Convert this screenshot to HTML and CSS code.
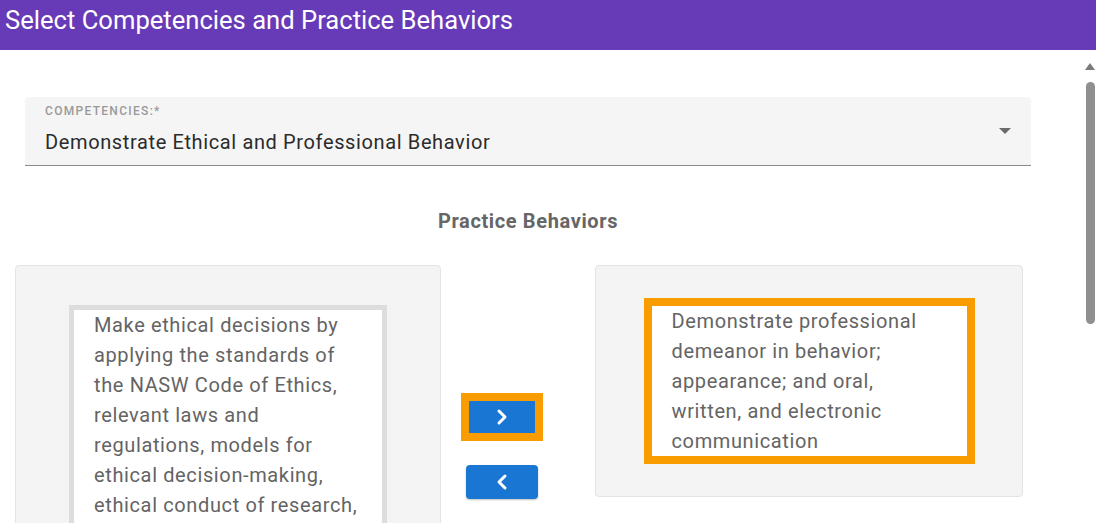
FILE: index.html
```html
<!DOCTYPE html>
<html>
<head>
  <title>Select Competencies</title>
  <link rel="stylesheet" href="styles.css">
</head>
<body>

  <div class="title-bar">
    <h1>Select Competencies and Practice Behaviors</h1>
  </div>

  <div class="main">
    <div class="content">

      <div class="select-field">
        <label class="select-label">Competencies:*</label>
        <div class="select-value">Demonstrate Ethical and Professional Behavior</div>
        <span class="select-arrow"></span>
      </div>

      <h2 class="section-title">Practice Behaviors</h2>

      <div class="transfer">
        <div class="list-panel left-panel">
          <div class="list-box">
            Make ethical decisions by applying the standards of the NASW Code of Ethics, relevant laws and regulations, models for ethical decision-making, ethical conduct of research, and additional codes of ethics as appropriate to context;
          </div>
        </div>

        <div class="transfer-buttons">
          <button class="move-btn focused">
            <svg width="24" height="24" viewBox="0 0 24 24"><path d="M9 6l6 6-6 6" fill="none" stroke="#fff" stroke-width="3" stroke-linecap="round" stroke-linejoin="round"/></svg>
          </button>
          <button class="move-btn">
            <svg width="24" height="24" viewBox="0 0 24 24"><path d="M15 6l-6 6 6 6" fill="none" stroke="#fff" stroke-width="3" stroke-linecap="round" stroke-linejoin="round"/></svg>
          </button>
        </div>

        <div class="list-panel right-panel">
          <div class="list-box selected">
            Demonstrate professional demeanor in behavior; appearance; and oral, written, and electronic communication
          </div>
        </div>
      </div>

    </div>

    <!-- fake scrollbar of the dialog body -->
    <div class="scrollbar">
      <span class="scroll-up"></span>
      <span class="scroll-thumb"></span>
    </div>
  </div>

</body>
</html>
```

FILE: styles.css
```css
body {
  margin: 0;
  background-color: #ffffff;
  font-family: Roboto, "Liberation Sans", sans-serif;
  overflow: hidden;
}

.title-bar {
  background-color: #673ab7;
  color: #ffffff;
  height: 50px;
  padding-left: 5px;
}

.title-bar h1 {
  margin: 0;
  font-size: 25.6px;
  font-weight: 400;
  line-height: 41px;
}

.main {
  display: flex;
}

.content {
  flex: 1;
  padding-top: 47px;
}

/* Select field */
.select-field {
  position: relative;
  margin: 0 53px 0 25px;
  height: 68px;
  background-color: #f5f5f5;
  border-bottom: 1px solid #8a8a8a;
  border-radius: 4px 4px 0 0;
  padding-left: 20px;
}

.select-label {
  display: block;
  padding-top: 7px;
  font-size: 12px;
  font-weight: 500;
  color: #9a9a9a;
  text-transform: uppercase;
  letter-spacing: 1.3px;
}

.select-value {
  margin-top: 12px;
  font-size: 20px;
  color: #2b2b2b;
  letter-spacing: 0.625px;
}

.select-arrow {
  position: absolute;
  right: 20px;
  top: 31px;
  border-left: 6px solid transparent;
  border-right: 6px solid transparent;
  border-top: 6px solid #6b6b6b;
}

.section-title {
  margin: 43px 0 0 25px;
  width: 1006px;
  text-align: center;
  font-size: 20px;
  font-weight: 700;
  color: #666666;
  letter-spacing: 0.625px;
}

/* Transfer list */
.transfer {
  display: flex;
  align-items: flex-start;
  margin: 32px 0 0 15px;
}

.list-panel {
  background-color: #f4f4f4;
  border: 1px solid #e4e4e4;
  border-radius: 4px;
  display: flex;
  justify-content: center;
}

.left-panel {
  width: 424px;
  padding-top: 39px;
  height: 400px;
}

.right-panel {
  width: 426px;
  padding: 32px 0;
}

.list-box {
  background-color: #ffffff;
  border: 5px solid #dddddd;
  padding: 0 20px;
  font-size: 20px;
  line-height: 30px;
  color: #646464;
  letter-spacing: 0.625px;
}

.left-panel .list-box {
  width: 268px;
}

.list-box.selected {
  border: 8px solid #f89c00;
  width: 275px;
}

.transfer-buttons {
  width: 122px;
  margin-right: 32px;
  display: flex;
  flex-direction: column;
  align-items: center;
  padding-top: 128px;
}

.move-btn {
  width: 72px;
  height: 34px;
  background-color: #1976d2;
  border: none;
  border-radius: 4px;
  display: flex;
  align-items: center;
  justify-content: center;
  padding: 0;
  box-shadow: 0 1px 2px rgba(0, 0, 0, 0.25);
}

.move-btn.focused {
  width: 82px;
  height: 48px;
  border: 8px solid #f89c00;
  border-radius: 0;
  box-shadow: none;
  margin-bottom: 24px;
}

/* Scrollbar */
.scrollbar {
  width: 12px;
  height: 473px;
  display: flex;
  flex-direction: column;
  align-items: center;
  padding-top: 13px;
}

.scroll-up {
  border-left: 5px solid transparent;
  border-right: 5px solid transparent;
  border-bottom: 7px solid #7a7a7a;
  margin-bottom: 12px;
}

.scroll-thumb {
  width: 9px;
  height: 242px;
  border-radius: 5px;
  background-color: #8f8f8f;
}
```
